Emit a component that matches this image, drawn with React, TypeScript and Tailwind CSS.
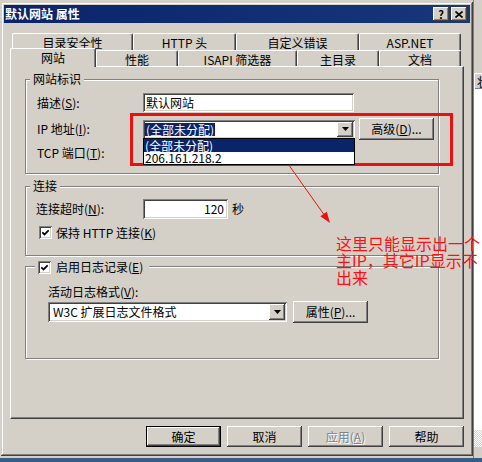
import React from "react";

const raised =
  "bg-[#d4d0c8] shadow-[inset_-1px_-1px_#404040,inset_1px_1px_#ffffff,inset_-2px_-2px_#808080]";
const sunken =
  "bg-white shadow-[inset_1px_1px_#808080,inset_-1px_-1px_#ffffff,inset_2px_2px_#404040,inset_-2px_-2px_#d4d0c8]";
const groupBox = "relative border border-[#808080] shadow-[inset_1px_1px_#ffffff,1px_1px_#ffffff]";
const tabBase =
  "flex justify-center pt-[2px] border-t border-l border-r border-t-white border-l-white border-r-[#404040] rounded-t-[2px] shadow-[inset_-1px_0_#808080] bg-[#d4d0c8] whitespace-nowrap";

function Check() {
  return (
    <div className={`flex h-[13px] w-[13px] shrink-0 items-center justify-center ${sunken}`}>
      <svg width="7" height="7" viewBox="0 0 7 7">
        <path d="M0.3 3.3 L2.5 5.5 L6.7 1.3" fill="none" stroke="#000" strokeWidth="1.8" />
      </svg>
    </div>
  );
}

function ArrowBtn() {
  return (
    <div className={`flex w-[16px] shrink-0 items-center justify-center ${raised}`}>
      <svg width="7" height="4" viewBox="0 0 7 4">
        <path d="M0 0h7L3.5 4z" fill="#000" />
      </svg>
    </div>
  );
}

export default function App() {
  return (
    <div className="relative h-[462px] w-[482px] overflow-hidden bg-[#d4d0c8] font-['Noto_Sans_CJK_SC',sans-serif] text-[12px] leading-[14px] text-black">
      {/* window behind, on the right */}
      <div className="absolute left-[473px] top-0 flex h-full w-[9px] flex-col border-l border-[#808080]">
        <div className="h-[73px] bg-[#d4d0c8]" />
        <div className="h-[16px] overflow-hidden border-l border-t border-white bg-[#d4d0c8] pl-[2px] leading-[15px] shadow-[inset_0_-1px_#808080]">
          状
        </div>
        <div className="h-[341px] bg-white" />
        <div className="h-[17px] bg-[repeating-conic-gradient(#d4d0c8_0_25%,#ffffff_0_50%)] bg-[length:2px_2px]" />
        <div className="flex-1 bg-[#d4d0c8]" />
      </div>

      {/* dialog */}
      <div className="absolute left-[1px] top-[2px] flex h-[454px] w-[472px] flex-col bg-[#d4d0c8] p-[3px] shadow-[inset_-1px_-1px_#404040,inset_1px_1px_#d4d0c8,inset_-2px_-2px_#808080,inset_2px_2px_#ffffff]">
        {/* title bar */}
        <div className="flex h-[18px] shrink-0 items-center bg-linear-to-r from-[#0a246a] to-[#17377a] pl-[1px] pr-[3px]">
          <span className="font-bold text-white">默认网站 属性</span>
          <div className="ml-auto flex gap-[2px]">
            <div className={`flex h-[14px] w-[16px] items-center justify-center text-[11px] font-bold leading-[11px] ${raised}`}>
              ?
            </div>
            <div className={`flex h-[14px] w-[16px] items-center justify-center ${raised}`}>
              <svg width="8" height="7" viewBox="0 0 8 7">
                <path d="M0.5 0.5 L7.5 6.5 M7.5 0.5 L0.5 6.5" stroke="#000" strokeWidth="1.6" />
              </svg>
            </div>
          </div>
        </div>

        <div className="flex flex-col px-[6px]">
          {/* tabs row 1 */}
          <div className="ml-[2px] mt-[10px] flex h-[17px]">
            <div className={`${tabBase} w-[121px]`}>目录安全性</div>
            <div className={`${tabBase} w-[103px]`}>HTTP 头</div>
            <div className={`${tabBase} w-[123px]`}>自定义错误</div>
            <div className={`${tabBase} w-[102px]`}>ASP.NET</div>
          </div>
          {/* tabs row 2 */}
          <div className="flex h-[16px] items-end">
            <div className={`${tabBase} relative z-10 -mb-px h-[19px] w-[86px]`}>网站</div>
            <div className={`${tabBase} h-[16px] w-[82px]`}>性能</div>
            <div className={`${tabBase} h-[16px] w-[119px]`}>ISAPI 筛选器</div>
            <div className={`${tabBase} h-[16px] w-[82px]`}>主目录</div>
            <div className={`${tabBase} h-[16px] w-[82px]`}>文档</div>
          </div>

          {/* tab page */}
          <div className="h-[353px] border border-b-[#404040] border-l-white border-r-[#404040] border-t-white pl-[14px] pt-[12px] shadow-[inset_-1px_-1px_#808080]">
            {/* group 1 */}
            <div className={`${groupBox} h-[95px] w-[414px]`}>
              <div className="-mt-[8px] ml-[4px] w-fit bg-[#d4d0c8] px-[3px]">网站标识</div>
              <div className="ml-[11px] mt-[7px] flex h-[19px] items-center">
                <div className="w-[106px]">
                  描述(<u>S</u>):
                </div>
                <div className={`flex h-[19px] w-[211px] items-center pl-[3px] ${sunken}`}>默认网站</div>
              </div>
              <div className="ml-[11px] mt-[6px] flex h-[22px] items-center">
                <div className="w-[106px]">
                  IP 地址(<u>I</u>):
                </div>
                <div className={`relative flex h-[19px] w-[212px] p-[2px] ${sunken}`}>
                  <div className="flex flex-1 items-center">
                    <span className="bg-[#0a246a] px-[1px] leading-[13px] text-white">(全部未分配)</span>
                  </div>
                  <ArrowBtn />
                  <div className="absolute left-0 top-[18px] z-10 w-[212px] border border-black bg-white">
                    <div className="h-[13px] bg-[#0a246a] pl-[1px] leading-[13px] text-white">(全部未分配)</div>
                    <div className="h-[12px] pl-[1px] leading-[12px]">206.161.218.2</div>
                  </div>
                </div>
                <div className={`ml-[4px] flex h-[22px] w-[75px] items-center justify-center ${raised}`}>
                  高级(<u>D</u>)...
                </div>
              </div>
              <div className="ml-[11px] mt-[3px] flex h-[19px] items-center">
                TCP 端口(<u>T</u>):
              </div>
            </div>

            {/* group 2 */}
            <div className={`${groupBox} mt-[12px] h-[70px] w-[414px]`}>
              <div className="-mt-[8px] ml-[4px] w-fit bg-[#d4d0c8] px-[3px]">连接</div>
              <div className="ml-[10px] mt-[6px] flex h-[20px] items-center">
                <div className="w-[107px]">
                  连接超时(<u>N</u>):
                </div>
                <div className={`flex h-[20px] w-[85px] items-center justify-end pr-[4px] ${sunken}`}>120</div>
                <div className="ml-[4px]">秒</div>
              </div>
              <div className="ml-[13px] mt-[7px] flex h-[13px] items-center">
                <Check />
                <div className="ml-[4px]">
                  保持 HTTP 连接(<u>K</u>)
                </div>
              </div>
            </div>

            {/* group 3 */}
            <div className={`${groupBox} mt-[10px] h-[93px] w-[414px]`}>
              <div className="-mt-[7px] ml-[9px] flex w-fit items-center bg-[#d4d0c8] pl-[3px] pr-[6px]">
                <Check />
                <div className="ml-[5px]">
                  启用日志记录(<u>E</u>)
                </div>
              </div>
              <div className="ml-[22px] mt-[11px]">
                活动日志格式(<u>V</u>):
              </div>
              <div className="ml-[22px] mt-[2px] flex h-[22px] items-center">
                <div className={`flex h-[20px] w-[239px] p-[2px] ${sunken}`}>
                  <div className="flex flex-1 items-center pl-[3px]">W3C 扩展日志文件格式</div>
                  <ArrowBtn />
                </div>
                <div className={`ml-[6px] flex h-[22px] w-[75px] items-center justify-center ${raised}`}>
                  属性(<u>P</u>)...
                </div>
              </div>
            </div>
          </div>

          {/* bottom buttons */}
          <div className="mt-[7px] flex h-[21px] justify-end gap-[6px]">
            <div className="flex h-[21px] w-[75px] items-center justify-center border border-black bg-[#d4d0c8] shadow-[inset_-1px_-1px_#404040,inset_1px_1px_#ffffff,inset_-2px_-2px_#808080]">
              确定
            </div>
            <div className={`flex h-[21px] w-[75px] items-center justify-center ${raised}`}>取消</div>
            <div className={`flex h-[21px] w-[75px] items-center justify-center text-[#808080] [text-shadow:1px_1px_#ffffff] ${raised}`}>
              应用(<u>A</u>)
            </div>
            <div className={`flex h-[21px] w-[75px] items-center justify-center ${raised}`}>帮助</div>
          </div>
        </div>
      </div>

      {/* taskbar strip */}
      <div className="absolute bottom-0 left-0 h-[4px] w-full bg-[#3b5b80]" />

      {/* annotations */}
      <div className="pointer-events-none absolute left-[130px] top-[113px] h-[53px] w-[323px] border-[3px] border-[#e81010]" />
      <svg className="pointer-events-none absolute left-0 top-0" width="482" height="462" viewBox="0 0 482 462">
        <rect x="282.5" y="157.5" width="4" height="4" fill="none" stroke="#e81010" strokeWidth="1" />
        <line x1="286" y1="161" x2="323.6" y2="214" stroke="#e81010" strokeWidth="1" />
        <polygon points="330,223 320.3,216.3 326.8,211.7" fill="#e81010" />
      </svg>
      <div className="pointer-events-none absolute left-[336px] top-[235px] whitespace-nowrap text-[16px] leading-[17px] text-[#ff1010]">
        <div>这里只能显示出一个</div>
        <div>主IP，其它IP显示不</div>
        <div>出来</div>
      </div>
    </div>
  );
}
